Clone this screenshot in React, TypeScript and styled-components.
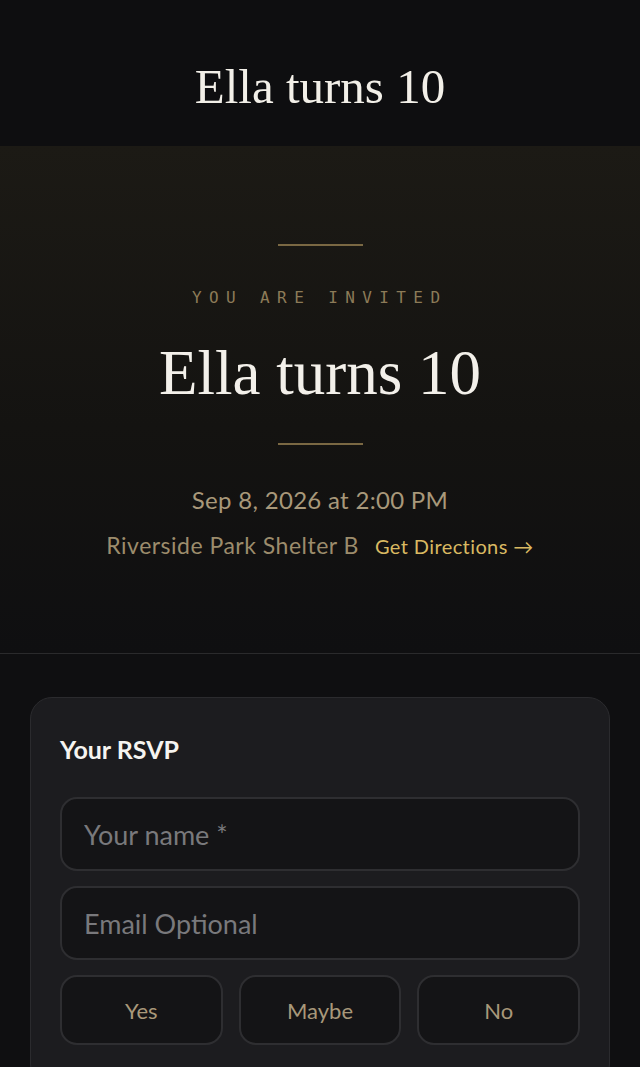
import { createGlobalStyle } from 'styled-components';
import styled from 'styled-components';

const GlobalStyle = createGlobalStyle`
    html, body {
        margin: 0;
        padding: 0;
        background: #0f0f11;
    }
    * {
        box-sizing: border-box;
    }
`;

const serif = `"Liberation Serif", "DejaVu Serif", serif`;
const sans = `Lato, "Noto Sans", sans-serif`;
const mono = `"DejaVu Sans Mono", "Liberation Mono", monospace`;

const Page = styled.div`
    min-height: 1067px;
    background: #0f0f11;
    font-family: ${sans};
`;

const Header = styled.header`
    height: 146px;
    display: flex;
    align-items: center;
    justify-content: center;
    background: #0e0e10;
`;

const HeaderTitle = styled.h1`
    margin: 0;
    padding-top: 26px;
    font-family: ${serif};
    font-weight: 400;
    font-size: 49px;
    color: #f2efe8;
`;

const Hero = styled.section`
    height: 508px;
    display: flex;
    flex-direction: column;
    align-items: center;
    padding-top: 98px;
    background: linear-gradient(180deg, #1c1a15 0%, #141311 55%, #0f0f11 100%);
    border-bottom: 1px solid #2a2a2c;
`;

const GoldRule = styled.div`
    width: 85px;
    height: 2px;
    background: #7a6843;
`;

const Kicker = styled.div`
    margin-top: 42px;
    font-family: ${mono};
    font-size: 16px;
    letter-spacing: 7.4px;
    margin-left: -4px;
    margin-right: -3.4px;
    color: #8c7b58;
`;

const HeroTitle = styled.h2`
    margin: 26px 0 30px;
    font-family: ${serif};
    font-weight: 400;
    font-size: 63px;
    line-height: 80px;
    color: #f3f0ea;
`;

const DateLine = styled.div`
    margin-top: 40px;
    font-size: 24px;
    letter-spacing: 0.3px;
    color: #a8987a;
`;

const PlaceRow = styled.div`
    margin-top: 17px;
    display: flex;
    align-items: baseline;
    gap: 16px;
`;

const Place = styled.span`
    font-size: 23px;
    letter-spacing: 0.5px;
    color: #9c8c6c;
`;

const Directions = styled.a`
    font-size: 20px;
    letter-spacing: 0.4px;
    color: #d9b962;
    text-decoration: none;
`;

const Main = styled.main`
    padding: 43px 30px 0;
`;

const Card = styled.div`
    background: #1c1c1f;
    border: 1px solid #2b2b2e;
    border-radius: 22px;
    padding: 36px 29px 40px;
`;

const CardTitle = styled.h3`
    margin: 0 0 33px;
    font-size: 25px;
    line-height: 30px;
    font-weight: 700;
    color: #f6f4f0;
`;

const Field = styled.input`
    display: block;
    width: 100%;
    height: 74px;
    margin-bottom: 15px;
    padding: 0 22px;
    border: 2px solid #2e2e31;
    border-radius: 17px;
    background: #141416;
    font-family: ${sans};
    font-size: 27px;
    color: #e0e0e0;
    outline: none;

    &::placeholder {
        color: #79797c;
    }
`;

const Choices = styled.div`
    display: grid;
    grid-template-columns: repeat(3, 1fr);
    gap: 16px;
`;

const Choice = styled.button`
    height: 70px;
    border: 2px solid #2e2e31;
    border-radius: 17px;
    background: #141416;
    font-family: ${sans};
    font-size: 22px;
    color: #a8987a;
    cursor: pointer;
`;

export default function App() {
    return (
        <>
            <GlobalStyle />
            <Page>
                <Header>
                    <HeaderTitle>Ella turns 10</HeaderTitle>
                </Header>
                <Hero>
                    <GoldRule />
                    <Kicker>YOU ARE INVITED</Kicker>
                    <HeroTitle>Ella turns 10</HeroTitle>
                    <GoldRule />
                    <DateLine>Sep 8, 2026 at 2:00 PM</DateLine>
                    <PlaceRow>
                        <Place>Riverside Park Shelter B</Place>
                        <Directions href="#">Get Directions →</Directions>
                    </PlaceRow>
                </Hero>
                <Main>
                    <Card>
                        <CardTitle>Your RSVP</CardTitle>
                        <Field placeholder="Your name *" />
                        <Field placeholder="Email Optional" />
                        <Choices>
                            <Choice>Yes</Choice>
                            <Choice>Maybe</Choice>
                            <Choice>No</Choice>
                        </Choices>
                    </Card>
                </Main>
            </Page>
        </>
    );
}
